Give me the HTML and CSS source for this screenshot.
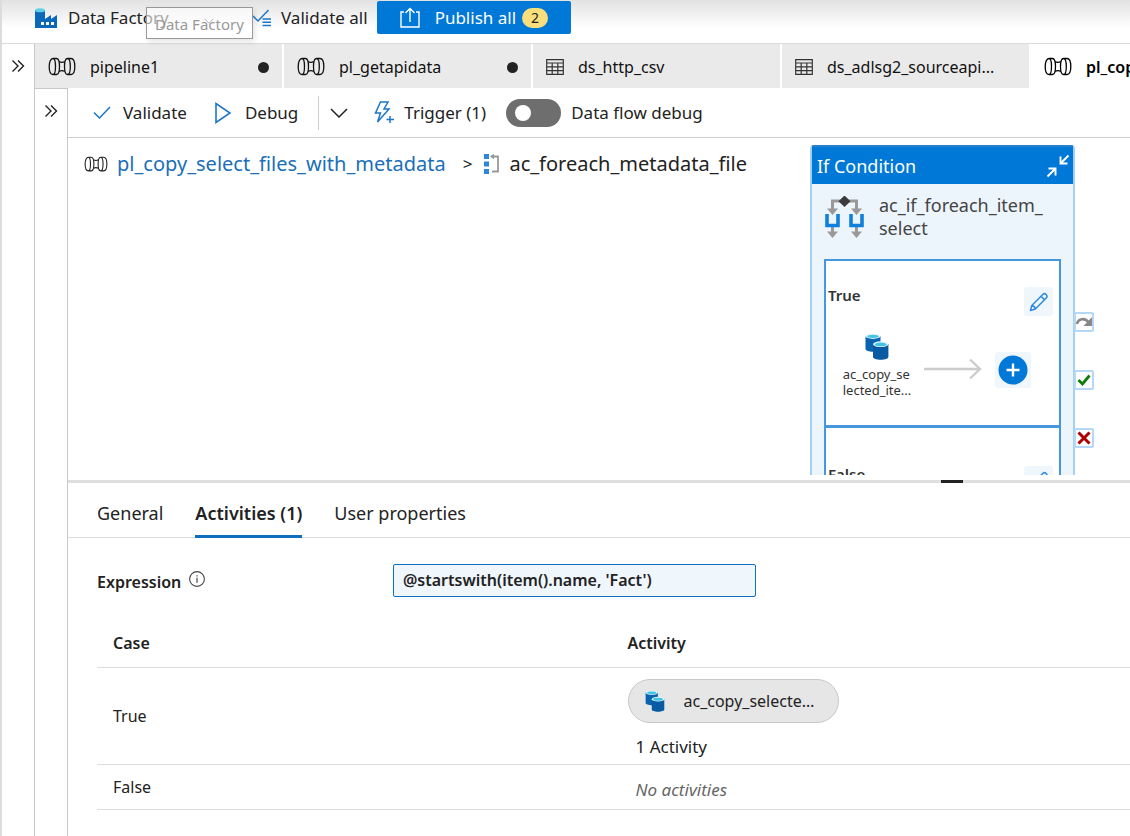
FILE: index.html
```
<!DOCTYPE html>
<html lang="en">
<head>
<meta charset="utf-8">
<title>Data Factory</title>
<link rel="stylesheet" href="styles.css">
</head>
<body>
<svg class="sprite" aria-hidden="true">
  <symbol id="i-pipe" viewBox="0 0 28 20">
    <g fill="none" stroke="currentColor" stroke-width="1.300">
      <path d="M5 1.500c-2.300 0-3.800 3.600-3.800 8s1.500 8 3.800 8h3.500c1.800 0 3-3.600 3-8s-1.200-8-3-8zM5 1.500c1.500 0 2.500 3.600 2.500 8s-1 8-2.500 8"/>
      <path d="M11 4.500c1.800 1 4 1 5.800 0M11 14.500c1.800-1 4-1 5.800 0"/>
      <path d="M19.500 1.500c-1.800 0-3 3.600-3 8s1.200 8 3 8H23c2.300 0 3.800-3.600 3.800-8s-1.500-8-3.800-8zM19.500 1.500c1.700 0 2.800 3.600 2.800 8s-1.100 8-2.800 8"/>
    </g>
  </symbol>
  <symbol id="i-table" viewBox="0 0 18 16">
    <path d="M.7.7h16.600v14.600H.7zM.7 4h16.600M.7 7.800h16.600M.7 11.600h16.600M6.200 4v11.500M11.800 4v11.500" fill="none" stroke="#333" stroke-width="1.200"/>
  </symbol>
  <symbol id="i-expand" viewBox="0 0 14 14">
    <path d="M1.500 1.500 7 7l-5.500 5.500M7 1.500 12.500 7 7 12.500" fill="none" stroke="currentColor" stroke-width="1.400"/>
  </symbol>
  <symbol id="i-chevron" viewBox="0 0 18 10">
    <path d="m1 1 8 8 8-8" fill="none" stroke="currentColor" stroke-width="1.500"/>
  </symbol>
  <symbol id="i-copy" viewBox="0 0 24 27">
    <path d="M.5 3v13c0 1.600 3.400 2.700 7.500 2.700s7.500-1.100 7.500-2.700V3z" fill="#0a63b0"/>
    <ellipse cx="8" cy="3.200" rx="7.500" ry="2.700" fill="#e4f6fb"/>
    <ellipse cx="8" cy="3.400" rx="5.800" ry="1.700" fill="#41c4e6"/>
    <path d="M8 11v13c0 1.600 3.400 2.700 7.700 2.700s7.700-1.100 7.700-2.700V11z" fill="#085aa3"/>
    <ellipse cx="15.700" cy="11.200" rx="7.700" ry="2.900" fill="#e4f6fb"/>
    <ellipse cx="15.700" cy="11.400" rx="6" ry="1.800" fill="#41c4e6"/>
  </symbol>
  <symbol id="i-pencil" viewBox="0 0 20 20">
    <path d="m1.500 18.500 1.300-5L14 2.300c2-1.800 5.200 1 3.500 3.500L6.300 17zM2.800 13.500c2 .3 3.200 1.500 3.500 3.500M12 4.300l3.600 3.600" fill="none" stroke="#2f8ae0" stroke-width="1.500" stroke-linejoin="round"/>
  </symbol>
</svg>

<div class="app">
  <header class="topbar">
    <button class="brand" type="button">
      <svg width="22" height="20" viewBox="0 0 22 20" aria-hidden="true">
        <path d="M0 2v18h22V7l-6 4V7l-6 4V2z" fill="#0b67b9"/>
        <ellipse cx="5" cy="2.200" rx="5" ry="2" fill="#5fd0ea"/>
        <path d="M6 14h3v3H6zM11 14h3v3h-3zM16 14h3v3h-3z" fill="#fff"/>
      </svg>
      <span>Data Factory</span>
      <svg class="brand-chevron" width="10" height="6" aria-hidden="true"><use href="#i-chevron"/></svg>
    </button>
    <div class="tooltip" role="tooltip">Data Factory</div>
    <button class="validate-all" type="button">
      <svg width="20" height="18" viewBox="0 0 20 18" fill="none" stroke="#1b76c9" stroke-width="1.500" aria-hidden="true">
        <path d="m1 7 5 5L16.500 1M10.500 10h8.500M10.500 13.200h8.500M10.500 16.400h8.500"/>
      </svg>
      <span>Validate all</span>
    </button>
    <button class="publish" type="button">
      <svg width="20" height="21" viewBox="0 0 20 21" fill="none" stroke="#fff" stroke-width="1.400" aria-hidden="true">
        <path d="M4 5H1v15h18V5h-3M10 15V1.500M5.500 6 10 1.500 14.500 6"/>
      </svg>
      <span>Publish all</span>
      <span class="count">2</span>
    </button>
  </header>

  <div class="shell">
    <aside class="rail">
      <button type="button" aria-label="Expand menu"><svg width="14" height="14"><use href="#i-expand"/></svg></button>
    </aside>
    <div class="workspace">
      <nav class="tabs">
        <button class="tab" type="button"><svg width="28" height="20"><use href="#i-pipe"/></svg><span>pipeline1</span><i class="dirty"></i></button>
        <button class="tab" type="button"><svg width="28" height="20"><use href="#i-pipe"/></svg><span>pl_getapidata</span><i class="dirty"></i></button>
        <button class="tab" type="button"><svg width="18" height="16"><use href="#i-table"/></svg><span>ds_http_csv</span></button>
        <button class="tab" type="button"><svg width="18" height="16"><use href="#i-table"/></svg><span>ds_adlsg2_sourceapi...</span></button>
        <button class="tab active" type="button"><svg width="28" height="20"><use href="#i-pipe"/></svg><span>pl_copy_select_fi...</span></button>
      </nav>
      <div class="content">
        <aside class="rail inner">
          <button type="button" aria-label="Expand activities"><svg width="14" height="14"><use href="#i-expand"/></svg></button>
        </aside>
        <main class="editor">
          <div class="toolbar">
            <button class="tool" type="button">
              <svg width="18" height="13" viewBox="0 0 18 13" fill="none" stroke="#1b76c9" stroke-width="1.500" aria-hidden="true"><path d="m1 6.500 5.500 5.500L17 1"/></svg>
              <span>Validate</span>
            </button>
            <button class="tool debug" type="button">
              <svg width="16" height="22" viewBox="0 0 16 22" fill="none" stroke="#1b76c9" stroke-width="1.600" aria-hidden="true"><path d="M1 1.500v19L15 11z"/></svg>
              <span>Debug</span>
            </button>
            <button class="more" type="button" aria-label="Debug options"><svg width="18" height="10"><use href="#i-chevron"/></svg></button>
            <button class="tool trigger" type="button">
              <svg width="21" height="23" viewBox="0 0 21 23" fill="none" stroke="#1b76c9" stroke-width="1.500" aria-hidden="true"><path d="M6.500 1H14l-4 7h5L3.500 21l3-9H1.500zM16 15v7M12.500 18.500h7.500"/></svg>
              <span>Trigger (1)</span>
            </button>
            <label class="switch"><input type="checkbox" role="switch"><span>Data flow debug</span></label>
          </div>

          <section class="canvas">
            <div class="crumbs">
              <svg width="24" height="17"><use href="#i-pipe"/></svg>
              <a href="#">pl_copy_select_files_with_metadata</a>
              <span class="sep">&gt;</span>
              <svg width="17" height="20" viewBox="0 0 17 20" aria-hidden="true">
                <path d="M1 0h5v5H1zM1 7.500h5v5H1zM1 15h5v5H1z" fill="#2b88d8"/>
                <path d="M8 2.500h7v15H9" fill="none" stroke="#999" stroke-width="1.800"/>
                <path d="M7 2.500 11-.3v5.600z" fill="#999"/>
              </svg>
              <span>ac_foreach_metadata_file</span>
            </div>

            <article class="node">
              <header class="node-head">
                <span>If Condition</span>
                <button type="button" aria-label="Collapse">
                  <svg width="24" height="24" viewBox="0 0 24 24" fill="none" stroke="#fff" stroke-width="1.900"><path d="M22.500 1.500 15 9M14.500 2.500V9.500h7M1.500 22.500 9 15M2.500 14.500h7v7"/></svg>
                </button>
              </header>
              <div class="node-title">
                <svg width="41" height="42" viewBox="0 0 41 42" aria-hidden="true">
                  <path d="M8.500 14V5h24v9M8.500 30v6M32.500 30v6" fill="none" stroke="#999" stroke-width="3"/>
                  <path d="M3 12.500h11L8.500 19zM27 12.500h11L32.500 19zM3 35.500h11L8.500 42zM27 35.500h11L32.500 42z" fill="#999"/>
                  <path d="M3 18v11.500h11V18M27 18v11.500h11V18" fill="none" stroke="#0f80dc" stroke-width="3.600"/>
                  <path d="m20.500-.5 6 5.800-6 5.800-6-5.800z" fill="#3b3b3b"/>
                </svg>
                <span>ac_if_foreach_item_<br>select</span>
              </div>
              <div class="branch">
                <div class="branch-head"><strong>True</strong><button class="edit" type="button" aria-label="Edit true"><svg width="20" height="20"><use href="#i-pencil"/></svg></button></div>
                <div class="flow">
                  <div class="mini"><svg width="24" height="27"><use href="#i-copy"/></svg><span>ac_copy_se<br>lected_ite...</span></div>
                  <svg class="arrow" width="58" height="22" viewBox="0 0 58 22" fill="none" stroke="#ccc" stroke-width="2.400" aria-hidden="true"><path d="M0 11h56M46 1.500 56 11l-10 9.500"/></svg>
                  <button class="add" type="button" aria-label="Add activity"><svg width="30" height="30" viewBox="0 0 30 30"><circle cx="15" cy="15" r="14.500" fill="#0078d7"/><path d="M15 8.500v13M8.500 15h13" stroke="#fff" stroke-width="2.400"/></svg></button>
                </div>
              </div>
              <div class="branch">
                <div class="branch-head"><strong>False</strong><button class="edit" type="button" aria-label="Edit false"><svg width="20" height="20"><use href="#i-pencil"/></svg></button></div>
              </div>
              <div class="outputs">
                <span><svg width="18" height="16" viewBox="0 0 18 16" aria-hidden="true"><path d="M2 10c1-5.500 8-7 12-1" fill="none" stroke="#888" stroke-width="2.600"/><path d="M17 3v9H8.500z" fill="#888"/></svg></span>
                <span><svg width="14" height="12" viewBox="0 0 14 12" aria-hidden="true"><path d="m1.500 6 4 4L12.500 1.500" fill="none" stroke="#107c10" stroke-width="2.800"/></svg></span>
                <span><svg width="14" height="14" viewBox="0 0 14 14" aria-hidden="true"><path d="m1.500 1.500 11 11M12.500 1.500l-11 11" stroke="#b00000" stroke-width="3"/></svg></span>
              </div>
            </article>
          </section>

          <div class="splitter"><i></i></div>

          <section class="panel">
            <nav class="panel-tabs">
              <button type="button">General</button>
              <button type="button" class="active">Activities (1)</button>
              <button type="button">User properties</button>
            </nav>
            <div class="panel-body">
              <div class="field">
                <div class="field-label">
                  <label for="expr">Expression</label>
                  <svg width="16" height="16" viewBox="0 0 16 16" fill="none" stroke="#444" aria-hidden="true"><circle cx="8" cy="8" r="7.400" stroke-width="1.100"/><path d="M8 6.800v5M8 4.200v1.400" stroke-width="1.200"/></svg>
                </div>
                <input id="expr" type="text" value="@startswith(item().name, 'Fact')">
              </div>
              <table>
                <thead><tr><th>Case</th><th>Activity</th></tr></thead>
                <tbody>
                  <tr class="row-true"><td>True</td><td>
                    <button class="chip" type="button"><svg width="20" height="22"><use href="#i-copy"/></svg><span>ac_copy_selecte…</span></button>
                    <div class="total">1 Activity</div>
                  </td></tr>
                  <tr class="row-false"><td>False</td><td><em>No activities</em></td></tr>
                </tbody>
              </table>
            </div>
          </section>
        </main>
      </div>
    </div>
  </div>
</div>
</body>
</html>
```

FILE: styles.css
```
* { box-sizing: border-box; }

body {
  margin: 0;
  background: #fff;
  color: #222;
  font: 17px/24px "Segoe UI", "Noto Sans", "Open Sans", sans-serif;
}

button {
  display: flex;
  align-items: center;
  margin: 0;
  padding: 0;
  border: 0;
  background: none;
  color: inherit;
  font: inherit;
  white-space: nowrap;
}

svg { display: block; flex: none; }
.sprite { position: absolute; width: 0; height: 0; }

.app {
  display: flex;
  flex-direction: column;
  height: 100vh;
  overflow: hidden;
  border-left: 2px solid #dcdcdc;
}

/* Top bar */
.topbar {
  position: relative;
  display: flex;
  align-items: flex-start;
  flex: none;
  height: 44px;
  padding-left: 33px;
  border-bottom: 1px solid #d8dcdc;
  background: linear-gradient(#e2e2e2, #fff 28px);
}
.brand { height: 36px; width: 217px; gap: 11px; }
.brand-chevron { margin: 6px 0 0 24px; }
.tooltip {
  position: absolute;
  left: 144px;
  top: 7px;
  padding: 4px 8px 2px;
  border: 1px solid #999;
  background: rgba(255, 255, 255, .6);
  box-shadow: 2px 3px 6px rgba(0, 0, 0, .1);
  color: #999;
  font-size: 15px;
}
.validate-all { height: 36px; gap: 9px; }
.publish {
  height: 33px;
  margin: 1px 0 0 9px;
  padding: 0 23px;
  gap: 15px;
  border-radius: 2px;
  background: #0078d7;
  color: #fff;
}
.publish .count {
  width: 26px;
  margin-left: -9px;
  border-radius: 10px;
  background: #f8df7c;
  color: #222;
  font-size: 14px;
  line-height: 20px;
  text-align: center;
}

/* Frame */
.shell, .content { display: flex; flex: 1; min-height: 0; }
.workspace { display: flex; flex-direction: column; flex: 1; min-width: 0; }
.rail {
  flex: none;
  width: 33px;
  border-right: 1px solid #c8c8c8;
}
.rail button { width: 32px; height: 44px; justify-content: center; }
.rail.inner { border-top: 1px solid #c8c8c8; }

.tabs {
  display: flex;
  flex: none;
  height: 44px;
  overflow: hidden;
}
.tab {
  flex: 0 0 249px;
  gap: 14px;
  padding: 2px 13px 0;
  border-right: 2px solid #fff;
  background: #eaeaea;
  color: #111;
  font-size: 16px;
}
.tab.active { background: #fff; color: #000; font-weight: 600; }
.dirty {
  width: 11px;
  height: 11px;
  margin-left: auto;
  border-radius: 50%;
  background: #222;
}

/* Editor */
.editor { display: flex; flex-direction: column; flex: 1; min-width: 0; }
.toolbar {
  display: flex;
  align-items: center;
  flex: none;
  height: 50px;
  padding-left: 25px;
  border-bottom: 1px solid #ccc;
}
.tool { gap: 12px; }
.debug { gap: 14px; margin-left: 28px; }
.trigger { gap: 9px; margin-left: 26px; }
.more {
  height: 34px;
  margin-left: 20px;
  padding-left: 11px;
  border-left: 1px solid #ccc;
}
.switch { display: flex; align-items: center; gap: 10px; margin-left: 20px; }
.switch input {
  appearance: none;
  display: flex;
  align-items: center;
  width: 55px;
  height: 28px;
  margin: 0;
  padding: 0 9px;
  border-radius: 14px;
  background: #6e6e6e;
}
.switch input::before {
  content: "";
  width: 16px;
  height: 16px;
  border-radius: 50%;
  background: #fff;
}

.canvas {
  position: relative;
  flex: 1;
  min-height: 0;
  margin-bottom: 5px;
  overflow: hidden;
}
.crumbs {
  display: flex;
  align-items: center;
  gap: 9px;
  padding: 12px 16px;
  font-size: 20px;
  line-height: 28px;
}
.crumbs a { color: #1a6fb8; text-decoration: none; }
.crumbs .sep { padding: 0 2px 0 8px; font-size: 17px; }

/* Activity node */
.node {
  position: absolute;
  left: 742px;
  top: 7px;
  width: 265px;
  height: 480px;
  padding: 0 12px;
  border: 2px solid #a5cff5;
  border-top-color: #2a7fcb;
  border-radius: 4px;
  background: #edf5fc;
}
.node-head {
  display: flex;
  align-items: center;
  justify-content: space-between;
  height: 37px;
  margin: 0 -12px;
  padding: 0 3px 0 5px;
  background: #0078d7;
  color: #fff;
  font-size: 18px;
}
.node-title {
  display: flex;
  gap: 14px;
  height: 75px;
  padding-top: 10px;
  color: #444;
  font-size: 18px;
  line-height: 23px;
}
.node-title svg { margin-top: 2px; }
.branch {
  height: 168px;
  padding-top: 26px;
  border: 2px solid #4598df;
  background: #fff;
}
.branch + .branch { margin-top: -1px; padding-top: 38px; }
.branch-head { display: flex; justify-content: space-between; padding: 0 6px 0 2px; }
.branch strong { font-size: 15px; line-height: 16px; font-weight: 600; color: #333; }
.edit, .add { justify-content: center; border-radius: 3px; background: #eff6fc; }
.edit { width: 29px; height: 29px; }
.flow { display: flex; align-items: center; padding-left: 16px; margin-top: 17px; }
.mini {
  display: flex;
  flex-direction: column;
  align-items: center;
  gap: 6px;
  width: 70px;
  color: #333;
  font-size: 13px;
  line-height: 16px;
}
.arrow { margin: 6px 0 0 12px; }
.add { width: 36px; height: 36px; margin: 8px 0 0 13px; }
.outputs {
  position: absolute;
  left: 262px;
  top: 165px;
  display: flex;
  flex-direction: column;
  gap: 38px;
}
.outputs span {
  display: flex;
  align-items: center;
  justify-content: center;
  width: 20px;
  height: 20px;
  border: 2px solid #b5d8f7;
  border-radius: 2px;
  background: #fff;
}

.splitter { flex: none; height: 3px; background: #dedede; }
.splitter i {
  display: block;
  width: 22px;
  height: 3px;
  margin-left: 873px;
  background: #222;
}

/* Properties panel */
.panel { flex: none; padding-bottom: 26px; }
.panel-tabs {
  display: flex;
  gap: 32px;
  height: 55px;
  padding-left: 29px;
  border-bottom: 1px solid #ddd;
  font-size: 18px;
}
.panel-tabs button { height: 55px; padding-top: 8px; border-bottom: 3px solid transparent; }
.panel-tabs .active { border-color: #106ebe; font-weight: 600; }
.panel-body { padding: 26px 0 0 29px; }
.field { display: flex; }
.field-label { display: flex; gap: 8px; width: 296px; }
.field-label label { padding-top: 6px; font-weight: 600; font-size: 16px; }
.field-label svg { margin-top: 7px; }
.field input {
  width: 363px;
  height: 33px;
  padding: 0 9px;
  border: 1px solid #106ebe;
  border-radius: 2px;
  background: #eff6fc;
  color: #222;
  font: inherit;
  font-size: 16px;
  font-weight: 600;
}

table {
  width: 100%;
  margin-top: 22px;
  border-collapse: collapse;
  table-layout: fixed;
  font-size: 16px;
}
th, td { padding: 0 0 0 16px; border-bottom: 1px solid #ddd; text-align: left; }
th + th, td + td { padding-left: 14px; }
th { height: 49px; font-weight: 600; }
.row-true td { height: 97px; }
.row-false td { height: 45px; }
.chip {
  width: 211px;
  height: 44px;
  padding-left: 16px;
  gap: 19px;
  border: 1px solid #c8c8c8;
  border-radius: 22px;
  background: #e6e6e6;
}
.total { margin: 12px 0 -6px; padding-left: 8px; font-size: 17px; }
.row-false td + td { padding-top: 6px; }
em { padding-left: 8px; color: #666; font-size: 17px; }
```
